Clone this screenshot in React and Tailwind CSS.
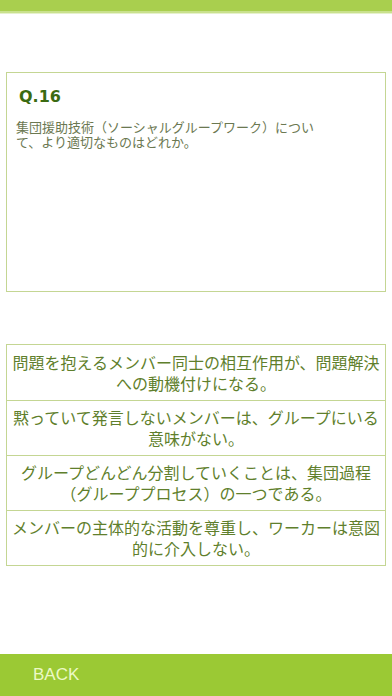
const answers = [
  "問題を抱えるメンバー同士の相互作用が、問題解決への動機付けになる。",
  "黙っていて発言しないメンバーは、グループにいる意味がない。",
  "グループどんどん分割していくことは、集団過程（グループプロセス）の一つである。",
  "メンバーの主体的な活動を尊重し、ワーカーは意図的に介入しない。",
];

export default function App() {
  return (
    <div
      className="flex flex-col h-[696px] w-[392px] bg-white overflow-hidden"
      style={{ fontFamily: '"Noto Sans CJK JP", "Noto Sans", sans-serif' }}
    >
      {/* top bar */}
      <div className="h-[11px] bg-[#a9cf4e]" />
      <div className="h-[2px] bg-[#c9e18d]" />
      <div className="h-[1px] bg-[#e6f1cc]" />

      {/* question */}
      <div className="mt-[58px] mx-[6px] h-[220px] border-[1.5px] border-[#c4d693] px-[12px] pt-[12px]">
        <div className="text-[16px] leading-[24px] font-bold text-[#3b6b12]" style={{ fontFamily: '"DejaVu Sans", Verdana, sans-serif' }}>
          Q.16
        </div>
        <p className="mt-[10px] -ml-[3px] max-w-[305px] text-[13px] leading-[15px] text-[#6b7851]">
          集団援助技術（ソーシャルグループワーク）について、より適切なものはどれか。
        </p>
      </div>

      {/* answers */}
      <ul className="mt-[52px] mx-[6px] border-[1.5px] border-[#c4d693]">
        {answers.map((a, i) => (
          <li
            key={i}
            className={`h-[55px] flex items-center justify-center text-center text-[16px] leading-[21px] text-[#5f7f2c] ${i > 0 ? "border-t-[1.5px] border-[#c4d693]" : ""}`}
          >
            {a}
          </li>
        ))}
      </ul>

      <div className="flex-1" />

      {/* bottom bar */}
      <div className="h-[42px] bg-[#9bc934] flex items-center pl-[33px]">
        <span className="text-[17px] text-[#ecf9c6]" style={{ fontFamily: '"Liberation Sans", Arial, sans-serif' }}>
          BACK
        </span>
      </div>
    </div>
  );
}
